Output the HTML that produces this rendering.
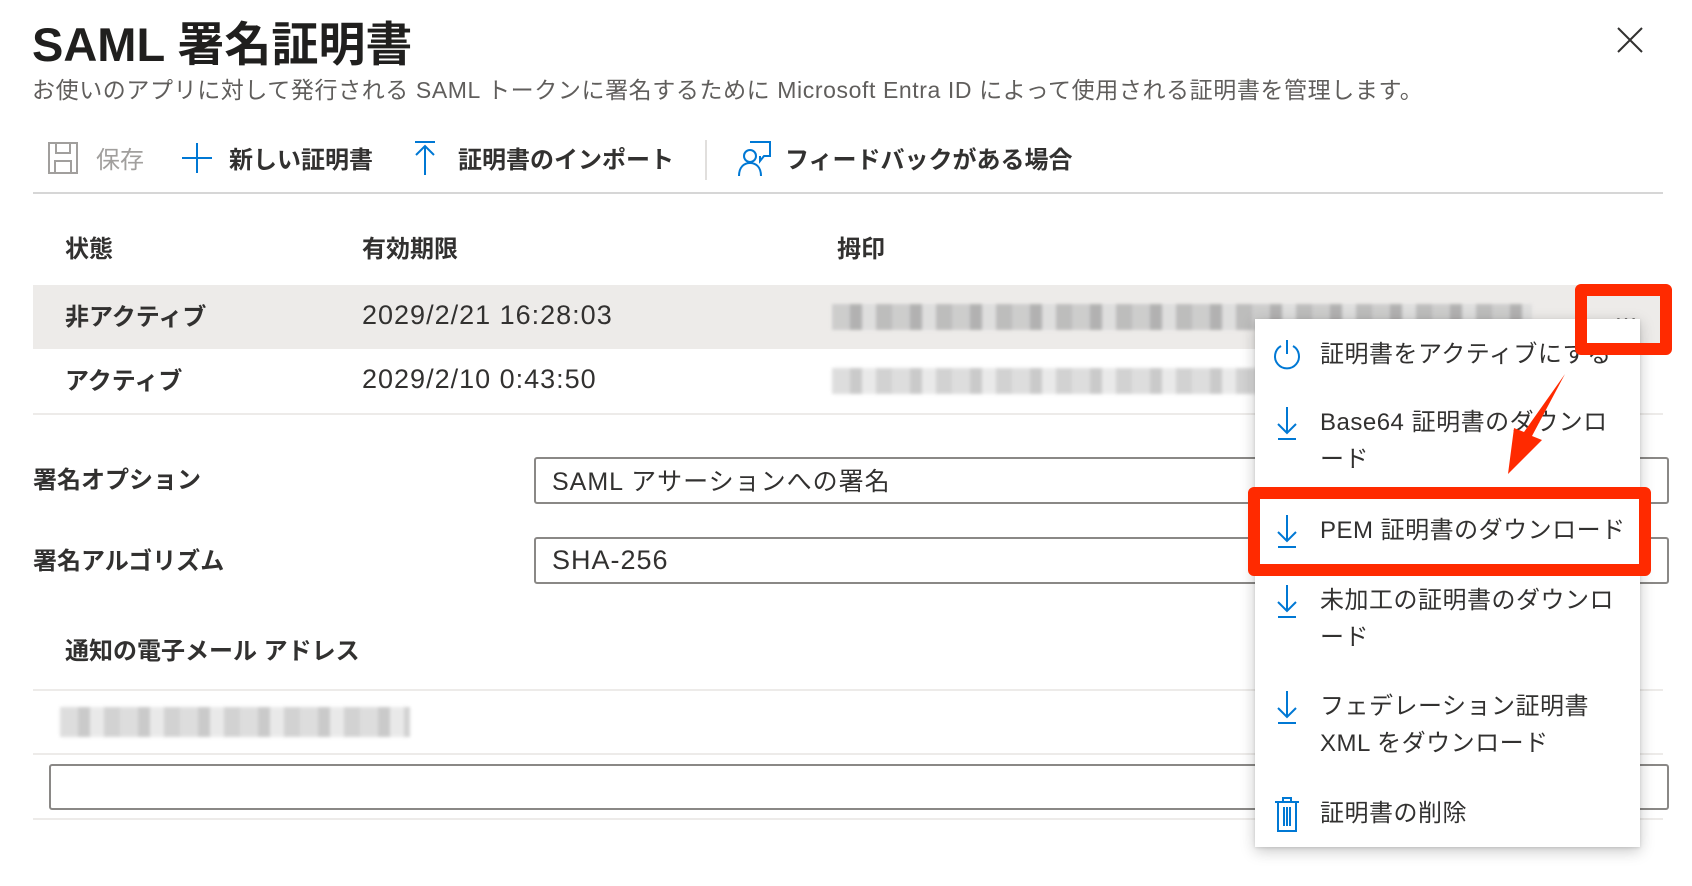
<!DOCTYPE html>
<html><head><meta charset="utf-8"><style>
*{margin:0;padding:0;box-sizing:border-box}
body{width:1692px;height:886px;background:#fff;position:relative;overflow:hidden;font-family:"Liberation Sans","Noto Sans CJK JP",sans-serif;color:#323130}
.a{position:absolute;white-space:nowrap}
.h{font-size:24px;font-weight:bold}
.t{font-size:27px;letter-spacing:1px}
.line{position:absolute;height:2px;background:#edebe9}
.inp{position:absolute;border:2px solid #8a8886;border-radius:3px;background:#fff}
.blur{position:absolute;background:repeating-linear-gradient(90deg,#c8c8c8 0 18px,#a8a8a8 18px 30px,#dcdcdc 30px 44px,#b5b5b5 44px 60px);filter:blur(1.5px);opacity:.85}
.mi{position:absolute;left:1320px;font-size:24px;line-height:37px;color:#323130;letter-spacing:.5px}
.ic{position:absolute;left:1272px}
</style></head><body>
<div class="a" style="left:32px;top:6px;font-size:47px;font-weight:bold;color:#201f1e">SAML 署名証明書</div>
<div class="a" style="left:32px;top:71px;font-size:23px;color:#605e5c;letter-spacing:.6px">お使いのアプリに対して発行される SAML トークンに署名するために Microsoft Entra ID によって使用される証明書を管理します。</div>
<svg class="a" style="left:1612px;top:22px" width="36" height="36"><path d="M6 6L30 30M30 6L6 30" stroke="#323130" stroke-width="2"/></svg>

<svg class="a" style="left:47px;top:141px" width="34" height="34"><rect x="2" y="2" width="28" height="30" fill="none" stroke="#a19f9d" stroke-width="2"/><rect x="9" y="2" width="14" height="10" fill="none" stroke="#a19f9d" stroke-width="2"/><rect x="8" y="20" width="16" height="12" fill="none" stroke="#a19f9d" stroke-width="2"/></svg>
<div class="a" style="left:96px;top:140px;color:#a19f9d;font-size:24px">保存</div>
<svg class="a" style="left:180px;top:141px" width="34" height="34"><path d="M17 2V32M2 17H32" stroke="#0078d4" stroke-width="2"/></svg>
<div class="a" style="left:229px;top:140px;font-size:24px;font-weight:bold">新しい証明書</div>
<svg class="a" style="left:413px;top:140px" width="24" height="36"><path d="M2 2H22M12 6V35M3 15L12 6L21 15" stroke="#0078d4" stroke-width="2" fill="none"/></svg>
<div class="a" style="left:458px;top:140px;font-size:24px;font-weight:bold">証明書のインポート</div>
<div class="a" style="left:705px;top:140px;width:2px;height:40px;background:#e1dfdd"></div>
<svg class="a" style="left:736px;top:139px" width="36" height="38"><circle cx="14" cy="17" r="6" fill="none" stroke="#0078d4" stroke-width="2"/><path d="M3 37C3 28 8 24 14 24C20 24 25 28 25 37" fill="none" stroke="#0078d4" stroke-width="2"/><path d="M14 3H34V17H28L24 22V17" fill="none" stroke="#0078d4" stroke-width="2"/></svg>
<div class="a" style="left:785px;top:140px;font-size:24px;font-weight:bold">フィードバックがある場合</div>
<div class="line" style="left:33px;top:192px;width:1630px;background:#d6d6d6"></div>

<div class="a h" style="left:65px;top:229px">状態</div>
<div class="a h" style="left:362px;top:229px">有効期限</div>
<div class="a h" style="left:837px;top:229px">拇印</div>
<div class="a" style="left:33px;top:285px;width:1630px;height:64px;background:#edebe9"></div>
<div class="a" style="left:65px;top:297px;font-weight:bold;font-size:24px">非アクティブ</div>
<div class="a t" style="left:362px;top:300px">2029/2/21 16:28:03</div>
<div class="blur" style="left:832px;top:304px;width:700px;height:26px"></div>
<div class="a" style="left:65px;top:361px;font-weight:bold;font-size:24px">アクティブ</div>
<div class="a t" style="left:362px;top:364px">2029/2/10 0:43:50</div>
<div class="blur" style="left:832px;top:368px;width:440px;height:26px;opacity:.6"></div>
<div class="line" style="left:33px;top:413px;width:1630px"></div>

<div class="a h" style="left:33px;top:460px">署名オプション</div>
<div class="inp" style="left:534px;top:457px;width:1135px;height:47px"></div>
<div class="a t" style="left:552px;top:462px;font-size:25px">SAML アサーションへの署名</div>
<div class="a h" style="left:33px;top:541px">署名アルゴリズム</div>
<div class="inp" style="left:534px;top:537px;width:1135px;height:47px"></div>
<div class="a t" style="left:552px;top:545px">SHA-256</div>
<div class="a h" style="left:65px;top:631px">通知の電子メール アドレス</div>
<div class="line" style="left:33px;top:689px;width:1630px"></div>
<div class="blur" style="left:60px;top:707px;width:350px;height:30px;opacity:.6"></div>
<div class="line" style="left:33px;top:753px;width:1630px"></div>
<div class="inp" style="left:49px;top:764px;width:1620px;height:46px"></div>
<div class="line" style="left:33px;top:818px;width:1630px"></div>

<div class="a" style="left:1614px;top:300px;font-size:24px;color:#323130;letter-spacing:2px">…</div>

<div class="a" style="left:1255px;top:319px;width:385px;height:528px;background:#fff;box-shadow:0 4px 14px rgba(0,0,0,.22),0 1px 3px rgba(0,0,0,.12)"></div>
<svg class="ic" style="top:337px" width="30" height="34"><path d="M9 9A12 12 0 1 0 21 9" fill="none" stroke="#0078d4" stroke-width="2"/><path d="M15 3V17" stroke="#0078d4" stroke-width="2"/></svg>
<div class="mi" style="top:336px">証明書をアクティブにする</div>
<svg class="ic" style="top:405px" width="30" height="36"><path d="M15 2V28M6 19L15 28L24 19M6 34H24" fill="none" stroke="#0078d4" stroke-width="2"/></svg>
<div class="mi" style="top:404px">Base64 証明書のダウンロ<br>ード</div>
<svg class="ic" style="top:513px" width="30" height="36"><path d="M15 2V28M6 19L15 28L24 19M6 34H24" fill="none" stroke="#0078d4" stroke-width="2"/></svg>
<div class="mi" style="top:512px">PEM 証明書のダウンロード</div>
<svg class="ic" style="top:583px" width="30" height="36"><path d="M15 2V28M6 19L15 28L24 19M6 34H24" fill="none" stroke="#0078d4" stroke-width="2"/></svg>
<div class="mi" style="top:582px">未加工の証明書のダウンロ<br>ード</div>
<svg class="ic" style="top:689px" width="30" height="36"><path d="M15 2V28M6 19L15 28L24 19M6 34H24" fill="none" stroke="#0078d4" stroke-width="2"/></svg>
<div class="mi" style="top:688px">フェデレーション証明書<br>XML をダウンロード</div>
<svg class="ic" style="top:795px" width="30" height="38"><path d="M3 7H27M11 7V3H19V7M6 7V36H24V7M12 12V31M15 12V31M18 12V31" fill="none" stroke="#0078d4" stroke-width="2"/></svg>
<div class="mi" style="top:795px">証明書の削除</div>

<div class="a" style="left:1575px;top:284px;width:97px;height:71px;border:12px solid #ff2a00;border-radius:6px"></div>
<div class="a" style="left:1248px;top:487px;width:403px;height:89px;border:12px solid #ff2a00;border-radius:6px"></div>
<svg class="a" style="left:1492px;top:370px" width="90" height="110"><path d="M73 4L40 66L50 70L16 104L22 58L32 62Z" fill="#ff2a00"/></svg>
</body></html>
